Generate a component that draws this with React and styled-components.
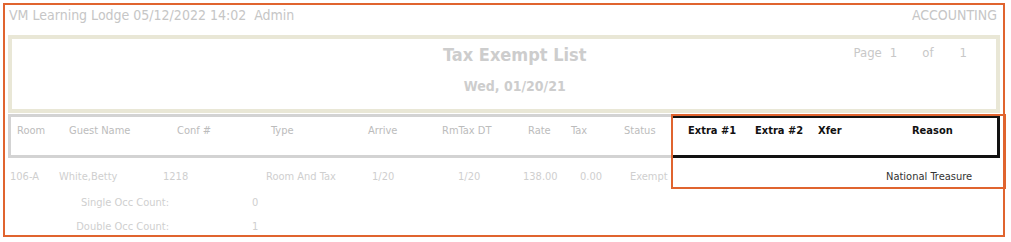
import styled, { createGlobalStyle } from 'styled-components'

const GlobalStyle = createGlobalStyle`
	body {
		margin: 0;
		background: #fff;
		font-family: "DejaVu Sans Condensed", "DejaVu Sans", sans-serif;
	}
`

const headCols = [
	{label: 'Room', w: 58, pad: 6},
	{label: 'Guest Name', w: 108},
	{label: 'Conf #', w: 94},
	{label: 'Type', w: 97},
	{label: 'Arrive', w: 74},
	{label: 'RmTax DT', w: 86},
	{label: 'Rate', w: 43},
	{label: 'Tax', w: 53},
	{label: 'Status', w: 48},
]

const extraCols = [
	{label: 'Extra #1', w: 83, pad: 16},
	{label: 'Extra #2', w: 63},
	{label: 'Xfer', w: 94},
	{label: 'Reason'},
]

const row = [
	{v: '106-A', w: 54, pad: 5},
	{v: 'White,Betty', w: 104},
	{v: '1218', w: 103},
	{v: 'Room And Tax', w: 106},
	{v: '1/20', w: 86},
	{v: '1/20', w: 65},
	{v: '138.00', w: 57},
	{v: '0.00', w: 50},
	{v: 'Exempt', w: 256},
]

const App = () => {
	return (
		<>
			<GlobalStyle />
			<Frame>
				<TopBar>
					<span>{'VM Learning Lodge 05/12/2022 14:02  Admin'}</span>
					<span>ACCOUNTING</span>
				</TopBar>

				<TitleBox>
					<TitleCol>
						<Title>Tax Exempt List</Title>
						<SubTitle>Wed, 01/20/21</SubTitle>
					</TitleCol>
					<PageInfo>
						<span>Page</span><span>1</span><span>of</span><span>1</span>
					</PageInfo>
				</TitleBox>

				<HeaderRow>
					<GrayPart>
						{headCols.map(c => (
							<HeadCell key={c.label} $w={c.w} $pad={c.pad}>{c.label}</HeadCell>
						))}
					</GrayPart>
					<BlackPart>
						{extraCols.map(c => (
							<HeadCell key={c.label} $w={c.w} $pad={c.pad} $dark>{c.label}</HeadCell>
						))}
					</BlackPart>
				</HeaderRow>

				<DataRow>
					{row.map((c, i) => (
						<DataCell key={i} $w={c.w} $pad={c.pad}>{c.v}</DataCell>
					))}
					<DataCell $dark>National Treasure</DataCell>
				</DataRow>

				<CountRow>
					<CountLabel>Single Occ Count:</CountLabel>
					<CountValue>0</CountValue>
				</CountRow>
				<CountRow>
					<CountLabel>Double Occ Count:</CountLabel>
					<CountValue>1</CountValue>
				</CountRow>

				<Highlight />
			</Frame>
		</>
	)
}

export default App

const Frame = styled.div`
	position: relative;
	margin: 3px 0 0 3px;
	width: 998px;
	height: 230px;
	border: 2px solid #e0642f;
`

const TopBar = styled.div`
	display: flex;
	justify-content: space-between;
	align-items: center;
	height: 19px;
	padding: 0 6px 0 4px;
	font-size: 14px;
	color: #c6c6c6;
	white-space: pre;
`

const TitleBox = styled.div`
	box-sizing: border-box;
	display: flex;
	justify-content: space-between;
	margin: 11px 0 0 3px;
	width: 992px;
	height: 78px;
	border: 4px solid #e9e7d6;
	padding: 0 29px 0 0;
`

const TitleCol = styled.div`
	flex: 1;
	display: flex;
	flex-direction: column;
	align-items: center;
	padding-left: 164px;
`

const Title = styled.div`
	margin-top: 5px;
	font-size: 18px;
	font-weight: 600;
	line-height: 22px;
	color: #cdcdcd;
`

const SubTitle = styled.div`
	margin-top: 12px;
	font-size: 14px;
	font-weight: 600;
	line-height: 16px;
	color: #cdcdcd;
`

const PageInfo = styled.div`
	display: flex;
	gap: 8px;
	margin-top: 6px;
	font-size: 13px;
	line-height: 16px;
	color: #c8c8c8;

	span:nth-child(3) {
		margin-left: 17px;
		margin-right: 18px;
	}
`

const HeaderRow = styled.div`
	display: flex;
	margin: 1px 0 0 3px;
	width: 992px;
	height: 44px;
`

const GrayPart = styled.div`
	box-sizing: border-box;
	display: flex;
	width: 664px;
	height: 44px;
	border: 3px solid #d3d3d3;
	border-right: none;
`

const BlackPart = styled.div`
	box-sizing: border-box;
	display: flex;
	flex: 1;
	height: 43px;
	margin-top: 1px;
	border: 3px solid #111;
	border-left: none;
`

const HeadCell = styled.div`
	box-sizing: border-box;
	flex: ${p => (p.$w ? `0 0 ${p.$w}px` : '1')};
	padding: ${p => (p.$dark ? 6 : 7)}px 0 0 ${p => p.$pad || 0}px;
	font-size: 11px;
	line-height: 14px;
	white-space: nowrap;
	color: ${p => (p.$dark ? '#111' : '#bcbcbc')};
	font-weight: ${p => (p.$dark ? 'bold' : 'normal')};
`

const DataRow = styled.div`
	display: flex;
	height: 32px;
	padding-top: 12px;
	box-sizing: border-box;
`

const DataCell = styled.div`
	box-sizing: border-box;
	flex: ${p => (p.$w ? `0 0 ${p.$w}px` : '1')};
	padding-left: ${p => p.$pad || 0}px;
	font-size: 11px;
	line-height: 14px;
	white-space: nowrap;
	color: ${p => (p.$dark ? '#333' : '#cfcfcf')};
`

const CountRow = styled.div`
	display: flex;
	align-items: center;
	height: 24px;
	font-size: 11px;
	color: #cfcfcf;
`

const CountLabel = styled.div`
	width: 164px;
	text-align: right;
`

const CountValue = styled.div`
	margin-left: 83px;
`

const Highlight = styled.div`
	position: absolute;
	box-sizing: border-box;
	left: 666px;
	top: 109px;
	width: 335px;
	height: 75px;
	border: 2px solid #e0642f;
	pointer-events: none;
`
